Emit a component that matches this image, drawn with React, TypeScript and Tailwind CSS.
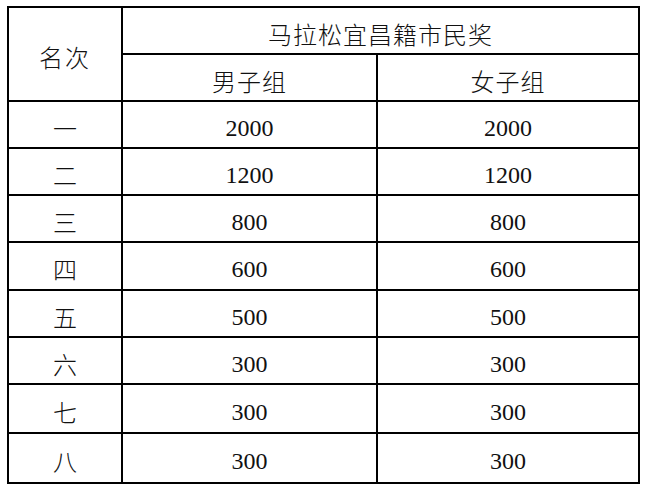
import React from "react";

const rows: [string, string, string][] = [
  ["一", "2000", "2000"],
  ["二", "1200", "1200"],
  ["三", "800", "800"],
  ["四", "600", "600"],
  ["五", "500", "500"],
  ["六", "300", "300"],
  ["七", "300", "300"],
  ["八", "300", "300"],
];

const cjk = "font-['Noto_Sans_CJK_SC','Noto_Sans_CJK_JP',sans-serif] font-light";

function Cell({ children, className = "" }: { children: React.ReactNode; className?: string }) {
  return (
    <div className={`bg-white flex items-center justify-center pt-[6px] text-[24px] leading-none text-[#111] ${className}`}>
      {children}
    </div>
  );
}

function Num({ v }: { v: string }) {
  return (
    <div className="bg-white flex items-center justify-center pt-[6px] text-[#111]">
      <span style={{ fontFamily: '"Liberation Serif", serif', fontSize: 24, lineHeight: 1 }}>{v}</span>
    </div>
  );
}

export default function App() {
  return (
    <div className="w-[645px] h-[490px] bg-white pt-[6px] pl-[7px]">
      <div className="inline-grid bg-black p-[2px] gap-[2px] grid-cols-[112px_253px_260px] grid-rows-[45px_45px_45px_45px_45px_46px_45px_45px_47px_48px]">
        <Cell className={`row-span-2 tracking-[2px] ${cjk}`}>名次</Cell>
        <Cell className={`col-span-2 tracking-[1px] ${cjk}`}>马拉松宜昌籍市民奖</Cell>
        <Cell className={`tracking-[1px] ${cjk}`}>男子组</Cell>
        <Cell className={`tracking-[1px] ${cjk}`}>女子组</Cell>
        {rows.map(([a, b, c]) => (
          <React.Fragment key={a}>
            <Cell className={cjk}>{a}</Cell>
            <Num v={b} />
            <Num v={c} />
          </React.Fragment>
        ))}
      </div>
    </div>
  );
}
